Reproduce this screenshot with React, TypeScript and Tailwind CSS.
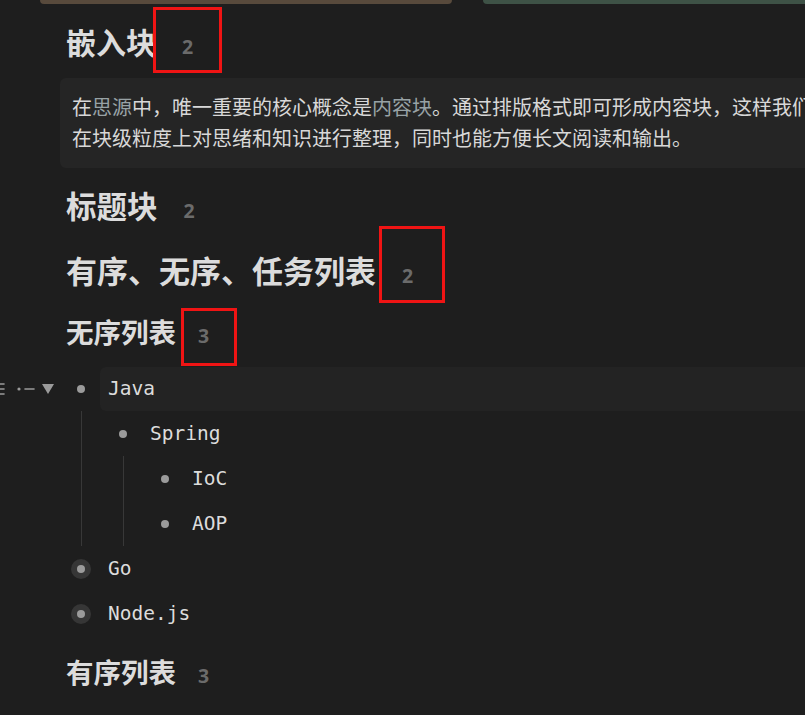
import React from "react";

const cjk = "font-['Noto_Sans',_'Noto_Sans_CJK_SC',_sans-serif]";
const mono = "font-['DejaVu_Sans_Mono',_'Noto_Sans_CJK_SC',_monospace]";

type Item = { label: string; folded?: boolean; hover?: boolean; children?: Item[] };

const items: Item[] = [
  {
    label: "Java",
    hover: true,
    children: [{ label: "Spring", children: [{ label: "IoC" }, { label: "AOP" }] }],
  },
  { label: "Go", folded: true },
  { label: "Node.js", folded: true },
];

const Count = ({ n, ml }: { n: number; ml: string }) => (
  <span className={`${ml} text-[19.5px] font-bold text-[#6b6b6b] font-['Noto_Sans',_sans-serif]`}>{n}</span>
);

const Gutter = () => (
  <div className="absolute left-[-76px] top-0 flex h-[45px] items-center">
    <svg width="86" height="16" viewBox="0 0 86 16" className="text-[#9b9b9b]">
      <g stroke="currentColor" strokeWidth="1.6" strokeLinecap="round">
        <line x1="1" y1="3" x2="14" y2="3" />
        <line x1="1" y1="8" x2="14" y2="8" />
        <line x1="1" y1="13" x2="14" y2="13" />
        <line x1="35" y1="8" x2="44" y2="8" />
      </g>
      <circle cx="29" cy="8" r="1.6" fill="currentColor" />
      <path d="M52 3 L64 3 L58 13 Z" fill="currentColor" />
    </svg>
  </div>
);

const ListItem = ({ item, first }: { item: Item; first?: boolean }) => (
  <div className="relative">
    {first && <Gutter />}
    <div className="flex h-[45px] items-center">
      <div className="flex w-[30px] justify-center">
        {item.folded ? (
          <span className="flex h-[20px] w-[20px] items-center justify-center rounded-full bg-[#363636]">
            <span className="h-[8px] w-[8px] rounded-full bg-[#9b9b9b]" />
          </span>
        ) : (
          <span className="h-[8px] w-[8px] rounded-full bg-[#9b9b9b]" />
        )}
      </div>
      <div
        className={`ml-[4px] flex h-[44px] flex-1 items-center pl-[8px] text-[19.5px] text-[#dcdcdc] ${mono} ${
          item.hover ? "rounded-l-[6px] bg-[#232323]" : ""
        }`}
      >
        {item.label}
      </div>
    </div>
    {item.children && (
      <div className="ml-[15px] border-l border-[#383838] pl-[26px]">
        {item.children.map((c) => (
          <ListItem key={c.label} item={c} />
        ))}
      </div>
    )}
  </div>
);

export default function App() {
  return (
    <div className={`relative h-[715px] w-[805px] overflow-hidden bg-[#1e1e1e] ${cjk}`}>
      <div className="flex h-[4px]">
        <div className="ml-[40px] w-[412px] rounded-b-[4px] bg-[#584a3c]" />
        <div className="ml-[31px] flex-1 rounded-bl-[4px] bg-[#3e5246]" />
      </div>

      <div className="pl-[66px]">
        <h2 className="mt-[19px] flex h-[40px] items-baseline text-[30px] font-bold leading-[40px] text-[#dcdcdc]">
          嵌入块
          <Count n={2} ml="ml-[26px]" />
        </h2>

        <div className="-ml-[6px] mt-[15px] w-[880px] rounded-[6px] bg-[#252525] pb-[14px] pl-[12px] pt-[14px] text-[20px] leading-[31px] text-[#d8d8d8] whitespace-nowrap">
          在<span className="text-[#98a2a5]">思源</span>中，唯一重要的核心概念是
          <span className="text-[#98a2a5]">内容块</span>。通过排版格式即可形成内容块，这样我们就可以
          <br />
          在块级粒度上对思绪和知识进行整理，同时也能方便长文阅读和输出。
        </div>

        <h2 className="mt-[18px] flex h-[40px] items-baseline text-[30.5px] font-bold leading-[40px] text-[#dcdcdc]">
          标题块
          <Count n={2} ml="ml-[26px]" />
        </h2>

        <h2 className="mt-[25px] flex h-[40px] items-baseline text-[31px] font-bold leading-[40px] text-[#dcdcdc]">
          有序、无序、任务列表
          <Count n={2} ml="ml-[26px]" />
        </h2>

        <h3 className="mt-[22px] flex h-[40px] items-baseline text-[27.5px] font-bold leading-[40px] text-[#dcdcdc]">
          无序列表
          <Count n={3} ml="ml-[22px]" />
        </h3>

        <div className="mt-[13px]">
          {items.map((it, i) => (
            <ListItem key={it.label} item={it} first={i === 0} />
          ))}
        </div>

        <h3 className="mt-[17px] flex h-[40px] items-baseline text-[27.5px] font-bold leading-[40px] text-[#dcdcdc]">
          有序列表
          <Count n={3} ml="ml-[22px]" />
        </h3>
      </div>

      <div className="absolute left-[153px] top-[7px] h-[66px] w-[69px] border-[3px] border-[#f01414]" />
      <div className="absolute left-[379px] top-[226px] h-[77px] w-[66px] border-[3px] border-[#f01414]" />
      <div className="absolute left-[181px] top-[308px] h-[58px] w-[56px] border-[3px] border-[#f01414]" />
    </div>
  );
}
